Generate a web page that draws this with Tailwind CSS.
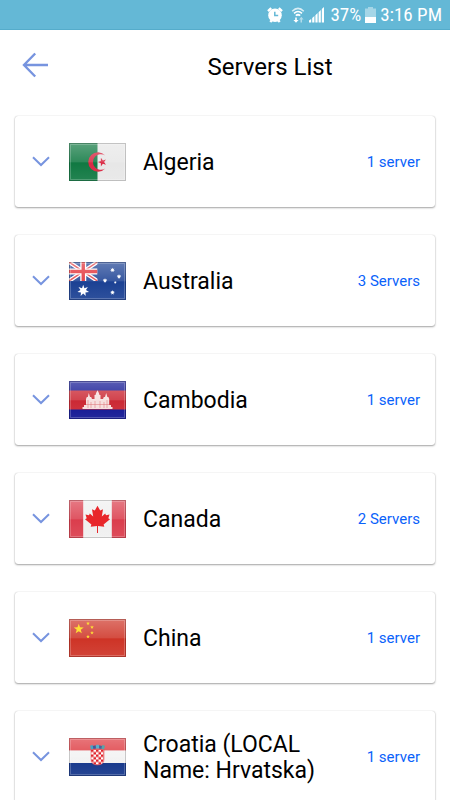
<!DOCTYPE html>
<html lang="en">
<head>
<meta charset="utf-8">
<meta name="viewport" content="width=device-width, initial-scale=1">
<title>Servers List</title>
<script src="https://cdn.jsdelivr.net/npm/@tailwindcss/browser@4"></script>
</head>
<body class="flex h-screen flex-col overflow-hidden bg-white font-['Roboto',sans-serif] text-black">

<!-- Shared symbols and gradients -->
<svg class="absolute size-0" aria-hidden="true">
  <defs>
    <linearGradient id="shine" x1="0" y1="0" x2="0" y2="1">
      <stop offset="0" stop-color="#fff" stop-opacity=".34"/>
      <stop offset=".5" stop-color="#fff" stop-opacity=".16"/>
      <stop offset=".52" stop-color="#fff" stop-opacity=".04"/>
      <stop offset="1" stop-color="#fff" stop-opacity=".12"/>
    </linearGradient>
    <symbol id="gloss" viewBox="0 0 57 38">
      <rect width="57" height="38" fill="url(#shine)"/>
      <rect x="1.5" y="1.5" width="54" height="35" fill="none" stroke="#fff" stroke-opacity=".22"/>
      <rect x=".5" y=".5" width="56" height="37" fill="none" stroke="#000" stroke-opacity=".18"/>
    </symbol>
    <symbol id="chevron" viewBox="0 0 18 11">
      <path d="M1 1.2 9 9 17 1.2" fill="none" stroke="#7794df" stroke-width="2"/>
    </symbol>
    <symbol id="star" viewBox="-10 -10 20 20">
      <path d="M0-10 2.4-3.2 9.5-3.1 3.8 1.2 5.9 8.1 0 4-5.9 8.1-3.8 1.2-9.5-3.1-2.4-3.2Z"/>
    </symbol>
    <symbol id="star7" viewBox="-10 -10 20 20">
      <path d="M0-10 2-4.2 7.8-6.2 4.6-1 9.7 2.2 3.7 2.9 4.3 9 0 4.7-4.3 9-3.7 2.9-9.7 2.2-4.6-1-7.8-6.2-2-4.2Z"/>
    </symbol>
    <pattern id="checks" width="5" height="5" patternUnits="userSpaceOnUse" x="22" y="11.5">
      <rect width="5" height="5" fill="#fff"/>
      <path d="M0 0h2.5v2.5H0ZM2.5 2.5H5V5H2.5Z" fill="#e0242c"/>
    </pattern>
  </defs>
</svg>

<div class="flex h-[30px] shrink-0 items-center justify-end border-b border-[#55accb] bg-[#64b8d6] pr-2 text-[19px] leading-6 text-white">
  <svg class="mr-2 size-4" viewBox="0 0 16 16" role="img" aria-label="Alarm">
    <path d="M1 4.2 4.2 1.2M15 4.2 11.8 1.2M3.3 15 5 13M12.7 15 11 13" stroke="#fff" stroke-width="2.4" fill="none"/>
    <circle cx="8" cy="8.2" r="6.8" fill="#fff"/>
    <path d="M7.8 4.8V8.6H11.2" stroke="#64b8d6" stroke-width="1.5" fill="none"/>
  </svg>
  <svg class="mr-1 h-4 w-[14px]" viewBox="0 0 14 16" role="img" aria-label="Wi-Fi">
    <g fill="none" stroke="#fff" stroke-width="1.5">
      <path d="M1.2 4.2Q7-1.4 12.8 4.2" opacity=".75"/><path d="M3 6.4Q7 2.6 11 6.4"/><path d="M4.8 8.6Q7 6.6 9.2 8.6"/>
    </g>
    <path d="M7 9.2 5.8 8.2H8.2Z" fill="#fff"/>
    <path d="M4.2 10.5v2.5H2.4L5 15.8l2.6-2.8H5.8v-2.5Z" fill="#fff"/>
    <path d="M9.5 15.5v-3H8l2.3-2.7 2.3 2.7H11v3Z" fill="#fff" opacity=".5"/>
  </svg>
  <svg class="mr-1.5 h-4 w-[15px]" viewBox="0 0 15 16" role="img" aria-label="Signal">
    <path d="M0 13.6 2.2 12v3.6H0ZM3.2 11 5.4 9v6.6H3.2ZM6.4 8.2 8.6 6v9.6H6.4ZM9.6 5.2 11.8 3v12.6H9.6ZM12.8 2 15 0v15.6h-2.2Z" fill="#fff"/>
  </svg>
  <span class="font-['Roboto_Condensed','Roboto',sans-serif]">37%</span>
  <svg class="mr-1 ml-1 h-4 w-[11px]" viewBox="0 0 11 16" role="img" aria-label="Battery">
    <path d="M3 0h5v1.5h3V10H0V1.5h3Z" fill="#fff" opacity=".42"/><path d="M0 10h11v6H0Z" fill="#fff"/>
  </svg>
  <time class="font-['Roboto_Condensed','Roboto',sans-serif]">3:16 PM</time>
</div>

<header class="grid h-[70px] shrink-0 grid-cols-[90px_1fr] items-center">
  <button type="button" aria-label="Back" class="flex h-full items-center pl-[22px]">
    <svg class="h-[26px] w-[27px]" viewBox="0 0 27 26"><path d="M26 13H2M13.2 1.5 2 13 13.2 24.5" fill="none" stroke="#7794df" stroke-width="2.4"/></svg>
  </button>
  <h1 class="pt-1 text-center text-2xl leading-[26px]">Servers List</h1>
</header>

<main class="min-h-0 flex-1 overflow-y-auto px-[15px] pt-4 pb-7 [scrollbar-width:none]">
  <ul class="flex flex-col gap-7">

    <li><button type="button" class="flex min-h-[91px] w-full items-center rounded-[3px] bg-white pr-[15px] pl-[17px] text-left shadow-[0_1px_2px_rgba(0,0,0,0.35),0_0_1px_rgba(0,0,0,0.25)]">
      <svg class="h-[11px] w-[18px] shrink-0"><use href="#chevron"/></svg>
      <svg class="ml-[19px] h-[38px] w-[57px] shrink-0" viewBox="0 0 57 38">
        <rect width="57" height="38" fill="#e6e6e6"/><rect width="28.5" height="38" fill="#06733a"/>
        <path d="M36.2 12.6A9.7 9.7 0 1 0 36.2 25.4 7.8 7.8 0 1 1 36.2 12.6Z" fill="#d8203c"/>
        <use href="#star" x="28.8" y="14.6" width="9" height="9" fill="#d8203c" transform="rotate(-18 33.3 19.1)"/>
        <use href="#gloss" width="57" height="38"/>
      </svg>
      <span class="ml-[17px] w-[180px] pt-0.5 text-[23px] leading-[26px]">Algeria</span>
      <span class="ml-auto shrink-0 text-[15px] leading-5 text-[#0a62fa]">1 server</span>
    </button></li>

    <li><button type="button" class="flex min-h-[91px] w-full items-center rounded-[3px] bg-white pr-[15px] pl-[17px] text-left shadow-[0_1px_2px_rgba(0,0,0,0.35),0_0_1px_rgba(0,0,0,0.25)]">
      <svg class="h-[11px] w-[18px] shrink-0"><use href="#chevron"/></svg>
      <svg class="ml-[19px] h-[38px] w-[57px] shrink-0" viewBox="0 0 57 38">
        <rect width="57" height="38" fill="#12398f"/>
        <svg width="28.5" height="19" viewBox="0 0 28.5 19">
          <path d="M0 0 28.5 19M28.5 0 0 19" stroke="#fff" stroke-width="4"/>
          <path d="M0 0 28.5 19M28.5 0 0 19" stroke="#e03a40" stroke-width="1.5"/>
          <path d="M14.25 0V19M0 9.5H28.5" stroke="#fff" stroke-width="6"/>
          <path d="M14.25 0V19M0 9.5H28.5" stroke="#e0242c" stroke-width="3.4"/>
        </svg>
        <g fill="#fff">
          <use href="#star7" x="8.2" y="22.7" width="12" height="12"/>
          <use href="#star7" x="41" y="5.5" width="5" height="5"/>
          <use href="#star7" x="47.5" y="12" width="5" height="5"/>
          <use href="#star7" x="33.5" y="16" width="5" height="5"/>
          <use href="#star7" x="44.8" y="19" width="3" height="3"/>
          <use href="#star7" x="41" y="28" width="5" height="5"/>
        </g>
        <use href="#gloss" width="57" height="38"/>
      </svg>
      <span class="ml-[17px] w-[180px] pt-0.5 text-[23px] leading-[26px]">Australia</span>
      <span class="ml-auto shrink-0 text-[15px] leading-5 text-[#0a62fa]">3 Servers</span>
    </button></li>

    <li><button type="button" class="flex min-h-[91px] w-full items-center rounded-[3px] bg-white pr-[15px] pl-[17px] text-left shadow-[0_1px_2px_rgba(0,0,0,0.35),0_0_1px_rgba(0,0,0,0.25)]">
      <svg class="h-[11px] w-[18px] shrink-0"><use href="#chevron"/></svg>
      <svg class="ml-[19px] h-[38px] w-[57px] shrink-0" viewBox="0 0 57 38">
        <rect width="57" height="38" fill="#060b8e"/><rect y="9.5" width="57" height="19" fill="#c9202c"/>
        <path d="M13.5 28v-2h1.5v-2h2v-6l.8-2h1l1-4 1.2 4h1.2l.8 2h2.5v-4h1l.6-2 1.4-2.8 1.4 2.8.6 2h1v4H34l.8-2H36l1.2-4 1.2 4h1l.8 2v6h1.8v2h1.5v2Z" fill="#f6dedd"/>
        <path d="M19 19v8M22 21v6M26 20v7M31 20v7M35 21v6M38 19v8M17 23.5h23" stroke="#d9666a" stroke-width=".5"/>
        <use href="#gloss" width="57" height="38"/>
      </svg>
      <span class="ml-[17px] w-[180px] pt-0.5 text-[23px] leading-[26px]">Cambodia</span>
      <span class="ml-auto shrink-0 text-[15px] leading-5 text-[#0a62fa]">1 server</span>
    </button></li>

    <li><button type="button" class="flex min-h-[91px] w-full items-center rounded-[3px] bg-white pr-[15px] pl-[17px] text-left shadow-[0_1px_2px_rgba(0,0,0,0.35),0_0_1px_rgba(0,0,0,0.25)]">
      <svg class="h-[11px] w-[18px] shrink-0"><use href="#chevron"/></svg>
      <svg class="ml-[19px] h-[38px] w-[57px] shrink-0" viewBox="0 0 57 38">
        <rect width="57" height="38" fill="#d93545"/><rect x="14.2" width="28.6" height="38" fill="#efefef"/>
        <use href="#gloss" width="57" height="38"/>
        <path d="M28.5 5.8 31.2 10.6 34 9.2 32.8 16.4 36.2 13.4 37 15.2 40.5 14.6 39.3 18.2 41 19.2 34.6 24.5 35.3 26.8 29 26V33H28V26L21.7 26.8 22.4 24.5 16 19.2 17.7 18.2 16.5 14.6 20 15.2 20.8 13.4 24.2 16.4 23 9.2 25.8 10.6Z" fill="#e8272b"/>
      </svg>
      <span class="ml-[17px] w-[180px] pt-0.5 text-[23px] leading-[26px]">Canada</span>
      <span class="ml-auto shrink-0 text-[15px] leading-5 text-[#0a62fa]">2 Servers</span>
    </button></li>

    <li><button type="button" class="flex min-h-[91px] w-full items-center rounded-[3px] bg-white pr-[15px] pl-[17px] text-left shadow-[0_1px_2px_rgba(0,0,0,0.35),0_0_1px_rgba(0,0,0,0.25)]">
      <svg class="h-[11px] w-[18px] shrink-0"><use href="#chevron"/></svg>
      <svg class="ml-[19px] h-[38px] w-[57px] shrink-0" viewBox="0 0 57 38">
        <rect width="57" height="38" fill="#cc2b1d"/>
        <use href="#gloss" width="57" height="38"/>
        <g fill="#ffdf35">
          <use href="#star" x="4.5" y="4.8" width="10.5" height="10.5"/>
          <use href="#star" x="17" y="2.4" width="4" height="4"/>
          <use href="#star" x="21" y="6.2" width="4" height="4"/>
          <use href="#star" x="21" y="11.8" width="4" height="4"/>
          <use href="#star" x="17" y="15.6" width="4" height="4"/>
        </g>
      </svg>
      <span class="ml-[17px] w-[180px] pt-0.5 text-[23px] leading-[26px]">China</span>
      <span class="ml-auto shrink-0 text-[15px] leading-5 text-[#0a62fa]">1 server</span>
    </button></li>

    <li><button type="button" class="flex min-h-[91px] w-full items-center rounded-[3px] bg-white pr-[15px] pl-[17px] text-left shadow-[0_1px_2px_rgba(0,0,0,0.35),0_0_1px_rgba(0,0,0,0.25)]">
      <svg class="h-[11px] w-[18px] shrink-0"><use href="#chevron"/></svg>
      <svg class="ml-[19px] h-[38px] w-[57px] shrink-0" viewBox="0 0 57 38">
        <rect width="57" height="38" fill="#f2f2f2"/><rect width="57" height="12.4" fill="#dc2f36"/><rect y="25" width="57" height="13" fill="#0a2d85"/>
        <use href="#gloss" width="57" height="38"/>
        <path d="M22 11.5H35V21Q35 27 28.5 27T22 21Z" fill="url(#checks)" stroke="#e0444a" stroke-width=".5"/>
        <path d="M21 7.8 23.8 7 24.4 10.8 22 11.5Z" fill="#4aa3c4"/><path d="M23.8 8 26.6 7.2 27 10.6 24.4 11Z" fill="#3c5ba0"/>
        <path d="M27 6.8H30V10.5H27Z" fill="#5ab0c8"/><path d="M30.2 7.2 33 8 32.6 11 30 10.6Z" fill="#4465a0"/>
        <path d="M33.2 7 36 7.8 35 11.5 32.6 10.8Z" fill="#58a5a8"/>
      </svg>
      <span class="ml-[17px] w-[180px] pt-0.5 text-[23px] leading-[26px]">Croatia (LOCAL Name: Hrvatska)</span>
      <span class="ml-auto shrink-0 text-[15px] leading-5 text-[#0a62fa]">1 server</span>
    </button></li>

  </ul>
</main>
</body>
</html>
